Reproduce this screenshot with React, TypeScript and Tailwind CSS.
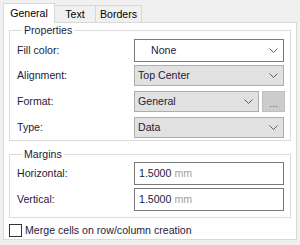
const font = { fontFamily: '"Liberation Sans", Arial, sans-serif' };

function Chevron() {
  return (
    <svg width="9" height="5" viewBox="0 0 9 5" className="shrink-0">
      <polyline points="0.5,0.5 4.5,4.5 8.5,0.5" fill="none" stroke="#5f5f5f" strokeWidth="1" />
    </svg>
  );
}

function Combo({ value, white, width = "w-[150px]", textPad = "pl-[3px]" }: { value: string; white?: boolean; width?: string; textPad?: string }) {
  return (
    <div
      className={`${width} h-full flex items-center justify-between pr-[5px] border ${
        white ? "bg-white border-[#7a7a7a]" : "bg-[#e1e1e1] border-[#adadad]"
      } ${textPad}`}
    >
      <span>{value}</span>
      <Chevron />
    </div>
  );
}

function Row({ label, h, mt, children }: { label: string; h: string; mt: string; children: React.ReactNode }) {
  return (
    <div className={`flex items-center justify-between ${h} ${mt}`}>
      <span>{label}</span>
      <div className="flex h-full">{children}</div>
    </div>
  );
}

function MmBox({ value }: { value: string }) {
  return (
    <div className="w-[150px] h-full flex items-center border border-[#7a7a7a] bg-white pl-[4px]">
      <span>{value}</span>
      <span className="ml-[3px] text-[#a0a0a0]">mm</span>
    </div>
  );
}

export default function App() {
  return (
    <div
      className="w-[300px] h-[245px] bg-[#f0f0f0] pt-[3px] px-[3px] overflow-hidden text-[10.6px] leading-[13px] text-[#1c1c40]"
      style={font}
    >
      <div className="flex items-end h-[19px]">
        <div className="relative z-10 w-[52px] h-[20px] -mb-px flex items-center justify-center bg-white border border-b-0 border-[#d9d9d9] text-black">
          General
        </div>
        <div className="w-[41px] h-[17px] flex items-center justify-center border-t border-r border-[#d9d9d9] text-black">
          Text
        </div>
        <div className="w-[46px] h-[17px] flex items-center justify-center border-t border-r border-[#d9d9d9] text-black">
          Borders
        </div>
      </div>

      <div className="h-[218px] border border-[#d9d9d9] bg-white px-[5px] flex flex-col">
        <fieldset className="mt-[1px] border border-[#dcdcdc] pl-[7px] pr-[6px] pb-[2px]">
          <legend className="ml-[5px] px-[2px]">Properties</legend>
          <Row label="Fill color:" h="h-[23px]" mt="mt-[2px]">
            <Combo value="None" white textPad="pl-[16px]" />
          </Row>
          <Row label="Alignment:" h="h-[21px]" mt="mt-[3px]">
            <Combo value="Top Center" />
          </Row>
          <Row label="Format:" h="h-[21px]" mt="mt-[5px]">
            <Combo value="General" width="w-[125px]" />
            <div className="ml-[3px] w-[23px] h-full bg-[#cccccc] border border-[#bfbfbf] flex items-end justify-center pb-[3px] text-[#6a6a6a] leading-[10px] -mr-[1px]">
              ...
            </div>
          </Row>
          <Row label="Type:" h="h-[21px]" mt="mt-[5px]">
            <Combo value="Data" />
          </Row>
        </fieldset>

        <fieldset className="mt-[7px] border border-[#dcdcdc] pl-[7px] pr-[6px] pb-[6px]">
          <legend className="ml-[5px] px-[2px]">Margins</legend>
          <Row label="Horizontal:" h="h-[23px]" mt="mt-[1px]">
            <MmBox value="1.5000" />
          </Row>
          <Row label="Vertical:" h="h-[23px]" mt="mt-[3px]">
            <MmBox value="1.5000" />
          </Row>
        </fieldset>

        <label className="mt-[5px] flex items-center h-[14px]">
          <span className="w-[13px] h-[13px] border border-[#333333] bg-white shrink-0" />
          <span className="ml-[3px]">Merge cells on row/column creation</span>
        </label>
      </div>
    </div>
  );
}
